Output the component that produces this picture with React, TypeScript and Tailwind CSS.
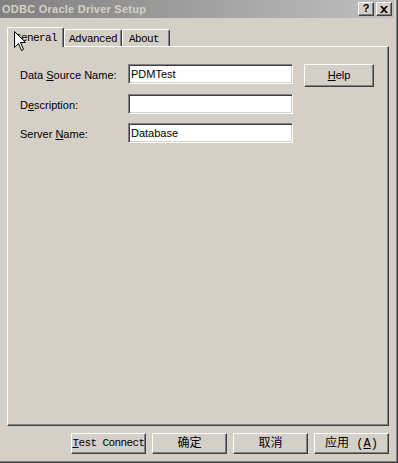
import React from "react"

const sans = { fontFamily: '"Liberation Sans", Arial, sans-serif' }
const mono = { fontFamily: '"Liberation Mono", "Noto Sans CJK SC", monospace' }
const cjk = { fontFamily: '"Liberation Mono", "Noto Sans CJK SC", monospace' }

function Field({ value }: { value: string }) {
  return (
    <div className="w-[165px] h-[20px] bg-white border border-t-[#808080] border-l-[#808080] border-r-white border-b-white shadow-[inset_1px_1px_0_#404040,inset_-1px_-1px_0_#d4d0c8] flex items-center pl-[2px] text-[11px] text-black leading-none">
      {value}
    </div>
  )
}

function Btn({ children, className = "", font = mono }: { children: React.ReactNode; className?: string; font?: React.CSSProperties }) {
  return (
    <div
      style={font}
      className={`flex items-center justify-center bg-[#d4d0c8] border border-t-white border-l-white border-r-[#404040] border-b-[#404040] shadow-[inset_-1px_-1px_0_#808080] text-black leading-none ${className}`}
    >
      {children}
    </div>
  )
}

function CaptionBtn({ children }: { children: React.ReactNode }) {
  return (
    <div className="w-[16px] h-[14px] flex items-center justify-center bg-[#d4d0c8] border border-t-white border-l-white border-r-[#404040] border-b-[#404040] shadow-[inset_-1px_-1px_0_#808080]">
      {children}
    </div>
  )
}

export default function App() {
  return (
    <div style={sans} className="w-[398px] h-[463px] bg-[#d4d0c8] overflow-hidden relative">
      <div className="h-full border-r border-b border-[#404040]">
        <div className="h-full border-r border-b border-[#808080] pr-[2px] pb-[2px] flex flex-col">
          {/* title bar */}
          <div className="h-[18px] flex items-center justify-between bg-gradient-to-r from-[#808080] to-[#c0c0c0] pl-[2px] pr-[2px]">
            <span className="text-[11px] font-bold text-[#d4d0c8] tracking-[0.25px] leading-none">ODBC Oracle Driver Setup</span>
            <div className="flex gap-[2px]">
              <CaptionBtn>
                <span className="text-[11px] font-bold text-black leading-none -mt-[1px]">?</span>
              </CaptionBtn>
              <CaptionBtn>
                <svg width="8" height="7" viewBox="0 0 8 7">
                  <path d="M0 0h2l2 2 2-2h2L5 3.5 8 7H6L4 5 2 7H0l3-3.5z" fill="#000" />
                </svg>
              </CaptionBtn>
            </div>
          </div>

          {/* tabs */}
          <div style={mono} className="mt-[9px] ml-[7px] h-[19px] flex items-end text-[11px] tracking-[-0.6px] text-black leading-none">
            <div className="relative z-10 w-[57px] h-[20px] -mb-[1px] bg-[#d4d0c8] border-l border-t border-white border-r border-r-[#404040] rounded-tl-[2px] rounded-tr-[2px] shadow-[inset_-1px_0_0_#808080] flex items-start pt-[5px] pl-[7px]">
              <span><span className="underline">G</span>eneral</span>
            </div>
            <div className="w-[58px] h-[17px] border-l border-t border-white border-r border-r-[#404040] rounded-tl-[2px] rounded-tr-[2px] shadow-[inset_-1px_0_0_#808080] flex items-start pt-[4px] pl-[4px]">
              Advanced
            </div>
            <div className="w-[48px] h-[17px] border-l border-t border-white border-r border-r-[#404040] rounded-tl-[2px] rounded-tr-[2px] shadow-[inset_-1px_0_0_#808080] flex items-start pt-[4px] pl-[6px]">
              About
            </div>
          </div>

          {/* panel */}
          <div className="ml-[7px] w-[382px] h-[380px] border border-t-white border-l-white border-r-[#404040] border-b-[#404040] shadow-[inset_-1px_-1px_0_#808080] pt-[17px] pl-[12px] flex gap-[11px] items-start">
            <div className="grid grid-cols-[108px_165px] text-[11px] text-black">
              <div className="h-[20px] flex items-center pt-[2px]">
                Data <span className="underline ml-[3px]">S</span>ource Name:
              </div>
              <Field value="PDMTest" />
              <div className="h-[20px] mt-[10px] flex items-center pt-[2px]">
                D<span className="underline">e</span>scription:
              </div>
              <div className="mt-[10px]">
                <Field value="" />
              </div>
              <div className="h-[20px] mt-[9px] flex items-center pt-[2px]">
                Server <span className="underline ml-[3px]">N</span>ame:
              </div>
              <div className="mt-[9px]">
                <Field value="Database" />
              </div>
            </div>
            <Btn font={sans} className="w-[70px] h-[23px] text-[11px]">
              <span><span className="underline">H</span>elp</span>
            </Btn>
          </div>

          {/* bottom buttons */}
          <div className="mt-[7px] ml-[7px] w-[382px] flex justify-end gap-[6px]">
            <Btn className="w-[75px] h-[21px] text-[11px] tracking-[-0.6px]">
              <span><span className="underline">T</span>est Connect</span>
            </Btn>
            <Btn font={cjk} className="w-[75px] h-[21px] text-[12px]">确定</Btn>
            <Btn font={cjk} className="w-[75px] h-[21px] text-[12px]">取消</Btn>
            <Btn font={cjk} className="w-[75px] h-[21px] text-[12px]">
              <span>应用 (<span className="underline">A</span>)</span>
            </Btn>
          </div>
        </div>
      </div>

      {/* mouse cursor */}
      <svg className="absolute z-20 left-[14px] top-[31px]" width="13" height="20" viewBox="0 0 13 20">
        <path d="M0.5 0.5V16.5L4.5 12.5L7.5 19.5L9.5 18.5L6.5 11.5H11.5Z" fill="#fff" stroke="#000" strokeWidth="1" />
      </svg>
    </div>
  )
}
